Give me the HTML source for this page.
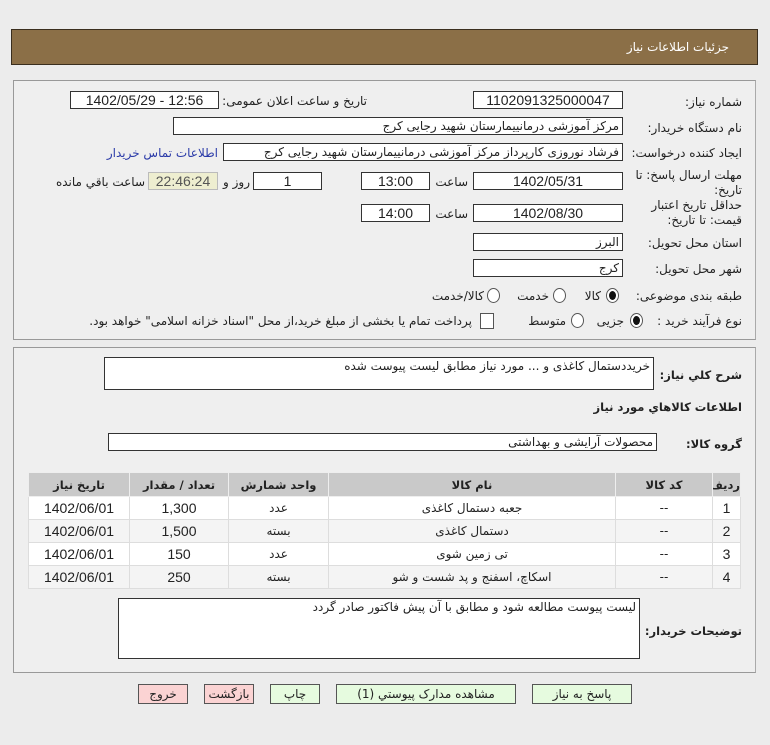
<!DOCTYPE html>
<html><head><meta charset="utf-8"><style>
body{margin:0;width:770px;height:745px;background:#ececec;font-family:"DejaVu Sans","Noto Sans CJK SC",sans-serif;font-size:12px;color:#222;position:relative;overflow:hidden}
.a{position:absolute}
.hdr{left:11px;top:29px;width:745px;height:34px;background:#8b6f47;border:1px solid #3a2e1e}
.hdr span{position:absolute;right:28px;top:10px;color:#fff;font-size:12px}
.pn{background:#efefef;border:1px solid #999;border-right-color:#aaa}
.bx{position:absolute;background:#fff;border:1px solid #333;box-sizing:border-box;height:18px;line-height:16px;text-align:center;font-family:"Liberation Sans",sans-serif;font-size:14px}
.bx.r{text-align:right;padding-right:3px;font-family:"DejaVu Sans",sans-serif;font-size:12px}
.l{position:absolute;text-align:right;white-space:nowrap;direction:rtl}
.b{font-weight:bold;font-size:11.5px}
.rad{position:absolute;width:11px;height:13px;border:1px solid #555;border-radius:50%;background:#fff}
.rad.on::after{content:"";position:absolute;left:2px;top:2px;width:7px;height:9px;border-radius:50%;background:#111}
table{border-collapse:collapse;table-layout:fixed;position:absolute;left:28px;top:472px;width:713px;direction:rtl;font-size:12px}
td,th{border:1px solid #ddd;text-align:center;height:22px;padding:0;overflow:hidden;white-space:nowrap}
th{background:#c9c9c9;height:23px;font-weight:bold;border-color:#eee;font-size:11.5px}
tr:nth-child(even) td{background:#fff}
tr:nth-child(odd) td{background:#f4f4f4}
.n{font-family:"Liberation Sans",sans-serif;font-size:14px}
.btn{position:absolute;top:684px;height:20px;border:1px solid #555;box-sizing:border-box;text-align:center;line-height:18px;font-size:12px}
.g{background:#e6fbdf}.p{background:#fbd3d3}
</style></head><body>
<div class="a hdr"><span>جزئیات اطلاعات نیاز</span></div>
<div class="a pn" style="left:13px;top:80px;width:741px;height:258px"></div>
<div class="l" style="right:28px;top:95px">شماره نیاز:</div>
<div class="bx" style="left:473px;top:91px;width:150px">1102091325000047</div>
<div class="l" style="right:403px;top:94px">تاریخ و ساعت اعلان عمومی:</div>
<div class="bx" style="left:70px;top:91px;width:149px">1402/05/29 - 12:56</div>
<div class="l" style="right:28px;top:121px">نام دستگاه خریدار:</div>
<div class="bx r" style="left:173px;top:117px;width:450px">مرکز آموزشی درمانییمارستان شهید رجایی کرج</div>
<div class="l" style="right:28px;top:146px">ایجاد کننده درخواست:</div>
<div class="bx r" style="left:223px;top:143px;width:400px">فرشاد نوروزی کارپرداز مرکز آموزشی درمانییمارستان شهید رجایی کرج</div>
<div class="l" style="right:552px;top:146px;color:#2a3aa8">اطلاعات تماس خریدار</div>
<div class="l" style="right:28px;top:168px;line-height:15px">مهلت ارسال پاسخ: تا<br>تاریخ:</div>
<div class="bx" style="left:473px;top:172px;width:150px">1402/05/31</div>
<div class="l" style="right:302px;top:175px">ساعت</div>
<div class="bx" style="left:361px;top:172px;width:69px">13:00</div>
<div class="bx" style="left:253px;top:172px;width:69px">1</div>
<div class="l" style="right:520px;top:175px">روز و</div>
<div class="bx" style="left:148px;top:172px;width:70px;background:#eeeed0;border-color:#bbb;color:#555">22:46:24</div>
<div class="l" style="right:625px;top:175px">ساعت باقي مانده</div>
<div class="l" style="right:28px;top:198px;line-height:15px">حداقل تاریخ اعتبار<br>قیمت: تا تاریخ:</div>
<div class="bx" style="left:473px;top:204px;width:150px">1402/08/30</div>
<div class="l" style="right:302px;top:207px">ساعت</div>
<div class="bx" style="left:361px;top:204px;width:69px">14:00</div>
<div class="l" style="right:28px;top:236px">استان محل تحویل:</div>
<div class="bx r" style="left:473px;top:233px;width:150px">البرز</div>
<div class="l" style="right:28px;top:262px">شهر محل تحویل:</div>
<div class="bx r" style="left:473px;top:259px;width:150px">کرج</div>
<div class="l" style="right:28px;top:289px">طبقه بندی موضوعی:</div>
<div class="rad on" style="left:606px;top:288px"></div><div class="l" style="right:169px;top:289px">کالا</div>
<div class="rad" style="left:553px;top:288px"></div><div class="l" style="right:221px;top:289px">خدمت</div>
<div class="rad" style="left:487px;top:288px"></div><div class="l" style="right:286px;top:289px">کالا/خدمت</div>
<div class="l" style="right:28px;top:314px">نوع فرآیند خرید :</div>
<div class="rad on" style="left:630px;top:313px"></div><div class="l" style="right:146px;top:314px">جزیی</div>
<div class="rad" style="left:571px;top:313px"></div><div class="l" style="right:204px;top:314px">متوسط</div>
<div class="a" style="left:480px;top:313px;width:12px;height:14px;border:1px solid #555;background:#fff"></div>
<div class="l" style="right:298px;top:314px">پرداخت تمام یا بخشی از مبلغ خرید،از محل "اسناد خزانه اسلامی" خواهد بود.</div>

<div class="a pn" style="left:13px;top:347px;width:741px;height:324px"></div>
<div class="l b" style="right:28px;top:368px">شرح کلي نياز:</div>
<div class="bx r" style="left:104px;top:357px;width:550px;height:33px;text-align:right">خریددستمال کاغذی و ... مورد نیاز مطابق لیست پیوست شده</div>
<div class="l b" style="right:28px;top:400px">اطلاعات کالاهاي مورد نياز</div>
<div class="l b" style="right:28px;top:437px">گروه کالا:</div>
<div class="bx r" style="left:108px;top:433px;width:549px">محصولات آرایشی و بهداشتی</div>
<table>
<colgroup><col style="width:28px"><col style="width:97px"><col style="width:287px"><col style="width:100px"><col style="width:99px"><col></colgroup>
<tr><th>رديف</th><th>کد کالا</th><th>نام کالا</th><th>واحد شمارش</th><th>تعداد / مقدار</th><th>تاریخ نیاز</th></tr>
<tr><td class="n">1</td><td>--</td><td>جعبه دستمال کاغذی</td><td>عدد</td><td class="n">1,300</td><td class="n">1402/06/01</td></tr>
<tr><td class="n">2</td><td>--</td><td>دستمال کاغذی</td><td>بسته</td><td class="n">1,500</td><td class="n">1402/06/01</td></tr>
<tr><td class="n">3</td><td>--</td><td>تی زمین شوی</td><td>عدد</td><td class="n">150</td><td class="n">1402/06/01</td></tr>
<tr><td class="n">4</td><td>--</td><td>اسکاچ، اسفنج و پد شست و شو</td><td>بسته</td><td class="n">250</td><td class="n">1402/06/01</td></tr>
</table>
<div class="l b" style="right:28px;top:624px">توضیحات خریدار:</div>
<div class="bx r" style="left:118px;top:598px;width:522px;height:61px;text-align:right">لیست پیوست مطالعه شود و مطابق با آن پیش فاکتور صادر گردد</div>

<div class="btn p" style="left:138px;width:50px">خروج</div>
<div class="btn p" style="left:204px;width:50px">بازگشت</div>
<div class="btn g" style="left:270px;width:50px">چاپ</div>
<div class="btn g" style="left:336px;width:180px">مشاهده مدارک پیوستي (1)</div>
<div class="btn g" style="left:532px;width:100px">پاسخ به نیاز</div>
</body></html>
